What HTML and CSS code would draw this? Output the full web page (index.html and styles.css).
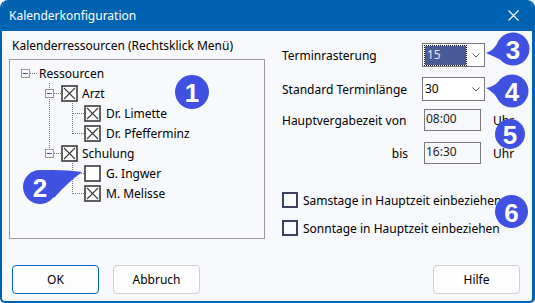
FILE: index.html
```html
<!DOCTYPE html>
<html lang="de">
<head>
    <meta charset="UTF-8">
    <title>Kalenderkonfiguration</title>
    <link rel="stylesheet" href="styles.css">
</head>
<body>
    <svg class="defs" width="0" height="0">
        <symbol id="cb-x" viewBox="0 0 17 17">
            <rect x="1" y="1" width="15" height="15" fill="#fff" stroke="#3a3a3a" stroke-width="1.6"/>
            <path d="M3 3 L14 14 M14 3 L3 14" stroke="#3a3a3a" stroke-width="1.1"/>
        </symbol>
        <symbol id="cb-empty" viewBox="0 0 17 17">
            <rect x="1" y="1" width="15" height="15" fill="#fff" stroke="#3a3a3a" stroke-width="1.6"/>
        </symbol>
        <symbol id="chevron" viewBox="0 0 8 5">
            <path d="M0.5 0.5 L4 4 L7.5 0.5" fill="none" stroke="#555" stroke-width="1"/>
        </symbol>
    </svg>

    <div class="window">
        <div class="titlebar">
            <span class="title">Kalenderkonfiguration</span>
            <svg class="close" width="11" height="11" viewBox="0 0 11 11">
                <path d="M0.5 0.5 L10.5 10.5 M10.5 0.5 L0.5 10.5" stroke="#fff" stroke-width="1.1"/>
            </svg>
        </div>

        <div class="content">
            <div class="main">
                <section class="resources">
                    <div class="group-label">Kalenderressourcen (Rechtsklick Menü)</div>
                    <div class="tree">
                        <ul>
                            <li>
                                <div class="row root">
                                    <span class="expander"></span><span class="hline"></span>
                                    <span class="text">Ressourcen</span>
                                </div>
                                <ul class="branch lvl1">
                                    <li>
                                        <div class="row lvl1-row">
                                            <span class="expander"></span><span class="hline"></span>
                                            <svg class="check"><use href="#cb-x"/></svg>
                                            <span class="text">Arzt</span>
                                        </div>
                                        <ul class="branch lvl2">
                                            <li class="row lvl2-row"><span class="hline"></span><svg class="check"><use href="#cb-x"/></svg><span class="text">Dr. Limette</span></li>
                                            <li class="row lvl2-row"><span class="hline"></span><svg class="check"><use href="#cb-x"/></svg><span class="text">Dr. Pfefferminz</span></li>
                                        </ul>
                                    </li>
                                    <li>
                                        <div class="row lvl1-row">
                                            <span class="expander"></span><span class="hline"></span>
                                            <svg class="check"><use href="#cb-x"/></svg>
                                            <span class="text">Schulung</span>
                                        </div>
                                        <ul class="branch lvl2">
                                            <li class="row lvl2-row"><span class="hline"></span><svg class="check"><use href="#cb-empty"/></svg><span class="text">G. Ingwer</span></li>
                                            <li class="row lvl2-row"><span class="hline"></span><svg class="check"><use href="#cb-x"/></svg><span class="text">M. Melisse</span></li>
                                        </ul>
                                    </li>
                                </ul>
                            </li>
                        </ul>
                    </div>
                </section>

                <section class="settings">
                    <div class="field">
                        <span class="field-label">Terminrasterung</span>
                        <div class="select">
                            <span class="value selected">15</span>
                            <svg class="chev"><use href="#chevron"/></svg>
                        </div>
                    </div>
                    <div class="field">
                        <span class="field-label">Standard Terminlänge</span>
                        <div class="select">
                            <span class="value">30</span>
                            <svg class="chev"><use href="#chevron"/></svg>
                        </div>
                    </div>
                    <div class="field time">
                        <span class="field-label">Hauptvergabezeit von</span>
                        <span class="input">08:00</span>
                        <span class="unit">Uhr</span>
                    </div>
                    <div class="field time until">
                        <span class="field-label">bis</span>
                        <span class="input">16:30</span>
                        <span class="unit">Uhr</span>
                    </div>

                    <div class="checks">
                        <label class="check-row"><span class="box"></span>Samstage in Hauptzeit einbeziehen</label>
                        <label class="check-row"><span class="box"></span>Sonntage in Hauptzeit einbeziehen</label>
                    </div>
                </section>
            </div>

            <div class="buttons">
                <button class="btn default">OK</button>
                <button class="btn">Abbruch</button>
                <button class="btn help">Hilfe</button>
            </div>
        </div>

        <!-- callout markers -->
        <svg class="badge b1" width="34" height="34" viewBox="0 0 34 34">
            <circle cx="17" cy="17" r="17"/>
            <text x="17" y="18">1</text>
        </svg>
        <svg class="badge b2" width="62" height="36" viewBox="0 0 62 36">
            <circle cx="17" cy="18" r="17"/>
            <path d="M14 1.3 Q40 0 59 3 Q44 14 31 29 Z"/>
            <text x="17" y="19">2</text>
        </svg>
        <svg class="badge b3" width="48" height="34" viewBox="0 0 48 34">
            <circle cx="29" cy="17" r="16.5"/>
            <path d="M15 8 Q10 19 2 21 Q11 25 17 28 Z"/>
            <text x="29" y="18">3</text>
        </svg>
        <svg class="badge b4" width="48" height="34" viewBox="0 0 48 34">
            <circle cx="28" cy="17" r="16.5"/>
            <path d="M14 8 Q9 13 2 14 Q10 18 16 28 Z"/>
            <text x="28" y="18">4</text>
        </svg>
        <svg class="badge b5" width="30" height="30" viewBox="0 0 30 30">
            <circle cx="15" cy="15" r="15"/>
            <text x="15" y="16">5</text>
        </svg>
        <svg class="badge b6" width="33" height="33" viewBox="0 0 33 33">
            <circle cx="16.5" cy="16.5" r="16.5"/>
            <text x="16.5" y="17.5">6</text>
        </svg>
    </div>
</body>
</html>
```

FILE: styles.css
```css
* {
    box-sizing: border-box;
}

html, body {
    margin: 0;
    padding: 0;
}

body {
    background: #fff;
    font-family: "Noto Sans", "Open Sans", sans-serif;
    font-size: 12px;
    color: #000;
}

.defs {
    position: absolute;
    width: 0;
    height: 0;
}

.window {
    position: relative;
    width: 535px;
    height: 303px;
    display: flex;
    flex-direction: column;
    background: #f7f8fc;
    border: 2px solid #0063b1;
    border-top: 0;
    border-right-width: 3px;
    border-radius: 8px 8px 5px 5px;
    overflow: hidden;
}

.titlebar {
    height: 31px;
    flex: none;
    display: flex;
    align-items: center;
    padding: 0 8px 0 7px;
    background: #0063b1;
    color: #fff;
}

.title {
    line-height: 16px;
}

.close {
    margin-left: auto;
    margin-right: 5px;
}

.content {
    flex: 1;
    display: flex;
    flex-direction: column;
    padding: 7px 12px 7px 7px;
}

.main {
    display: flex;
    gap: 17px;
}

/* left: resource tree */
.resources {
    width: 256px;
}

.group-label {
    padding-left: 3px;
    line-height: 16px;
}

.tree {
    margin-top: 5px;
    height: 180px;
    border: 1px solid #9c9c9c;
    background: #f8f9fc;
    padding-top: 3px;
}

.tree ul {
    list-style: none;
    margin: 0;
    padding: 0;
}

.row {
    display: flex;
    align-items: center;
    height: 20px;
}

.root {
    padding-left: 11px;
}

.lvl1-row {
    padding-left: 35px;
}

.lvl2-row {
    padding-left: 62px;
}

.expander {
    width: 9px;
    height: 9px;
    flex: none;
    border: 1px solid #9a9a9a;
    background: #fff linear-gradient(#3d5aa6, #3d5aa6) center / 5px 1px no-repeat;
}

.hline {
    width: 7px;
    flex: none;
    border-top: 1px dotted #7a7a7a;
}

.root .hline {
    margin-right: 2px;
}

.lvl2-row .hline {
    width: 12px;
}

.check {
    width: 17px;
    height: 17px;
    flex: none;
}

.lvl1-row .text {
    margin-left: 4px;
}

.lvl2-row .text {
    margin-left: 5px;
}

.branch.lvl1 {
    background: repeating-linear-gradient(#7a7a7a 0 1px, transparent 1px 2px) 39px 0 / 1px 66px no-repeat;
}

.branch.lvl2 {
    background: repeating-linear-gradient(#7a7a7a 0 1px, transparent 1px 2px) 62px 0 / 1px 30px no-repeat;
}

/* right: settings */
.settings {
    flex: 1;
    padding-top: 5px;
}

.field {
    display: flex;
    align-items: center;
    height: 24px;
}

.field + .field {
    margin-top: 10px;
}

.field.time {
    margin-top: 7px;
}

.field.until {
    margin-top: 9px;
}

.field-label {
    width: 140px;
    flex: none;
}

.until .field-label {
    text-align: right;
    padding-right: 14px;
}

.select {
    width: 63px;
    height: 24px;
    display: flex;
    align-items: center;
    border: 1px solid #7a7a7a;
    background: #fff;
}

.value {
    padding-left: 2px;
    line-height: 18px;
}

.value.selected {
    margin-left: 2px;
    width: 41px;
    height: 19px;
    background: #4a5a96;
    color: #e4e8f6;
    outline: 1px dotted #1c1c1c;
}

.chev {
    width: 8px;
    height: 5px;
    margin-left: auto;
    margin-right: 4px;
}

.input {
    width: 57px;
    height: 22px;
    margin-left: 2px;
    padding-left: 1px;
    border: 1px solid #7a7a7a;
    line-height: 18px;
    color: #222;
}

.unit {
    margin-left: 12px;
}

.checks {
    margin-top: 25px;
}

.check-row {
    display: flex;
    align-items: center;
    height: 20px;
}

.check-row + .check-row {
    margin-top: 8px;
}

.box {
    width: 16px;
    height: 16px;
    margin-right: 5px;
    border: 2px solid #39425f;
    background: #fafbfd;
}

/* dialog buttons */
.buttons {
    display: flex;
    gap: 14px;
    margin-top: auto;
    padding-left: 3px;
}

.btn {
    width: 87px;
    height: 29px;
    font: inherit;
    color: #000;
    background: #fdfdfd;
    border: 1px solid #d0d0d0;
    border-radius: 4px;
}

.btn.default {
    border-color: #0067c0;
}

.btn.help {
    margin-left: auto;
}

/* numbered callouts */
.badge {
    position: absolute;
    fill: #4050e0;
}

.badge text {
    fill: #fff;
    font-family: "Liberation Sans", Arial, sans-serif;
    font-weight: bold;
    font-size: 26px;
    text-anchor: middle;
    dominant-baseline: central;
}

.b1 { left: 173px; top: 75px; }
.b2 { left: 21px; top: 169px; }
.b3 { left: 482px; top: 32px; }
.b4 { left: 482px; top: 74px; }
.b5 { left: 493px; top: 119px; }
.b6 { left: 493px; top: 195px; }
```
